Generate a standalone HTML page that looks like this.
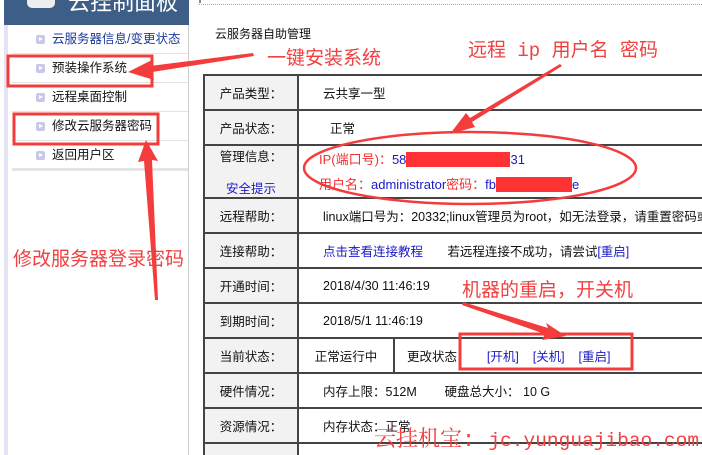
<!DOCTYPE html>
<html><head><meta charset="utf-8"><style>
*{margin:0;padding:0;box-sizing:border-box}
html,body{width:702px;height:455px;overflow:hidden}
body{background:#fff;position:relative;font-family:"Liberation Sans","Noto Sans CJK SC",sans-serif;font-size:12px;color:#111}
.abs{position:absolute}
#hdr{left:4px;top:0;width:185px;height:25px;background:#3d5f87;overflow:hidden}
#side{left:4px;top:25px;width:185px;height:430px;border-left:4px solid #e4e4f4;border-right:1px solid #d0d0d0}
.it{position:absolute;left:4px;width:176px;height:29px;border-bottom:1px solid #e2e2e2;line-height:29px;padding-left:24px;font-size:12.5px}
.it:before{content:"";position:absolute;left:24px;top:10px;width:9px;height:9px;background:#c8c8ea;border-radius:2px}
.it:after{content:"";position:absolute;left:27px;top:12px;border-left:4px solid #fff;border-top:2.5px solid transparent;border-bottom:2.5px solid transparent}
.it span{margin-left:16px}
#tw{position:absolute;left:203px;top:74px;width:499px;height:381px;overflow:hidden}
table{border-collapse:collapse;width:520px}
td{border:2px solid #444;height:35px;padding:0;font-size:12.5px;white-space:nowrap;overflow:hidden}
tr{height:35px}
td.l{width:94px;background:#f2f2f2;text-align:center}
td.v{padding-left:24px}
.blue{color:#1a1ac8}
.red{color:#f03030}
.ann{color:#f04040;font-family:"Liberation Mono","Noto Sans CJK SC",monospace;position:absolute;white-space:nowrap;font-size:19px}
</style></head><body>
<div id="hdr" class="abs">
<div class="abs" style="left:23px;top:-12px;width:28px;height:20px;background:#eee;border-radius:5px"></div>
<div class="abs" style="left:64px;top:-12px;color:#fff;font-size:22px;line-height:30px">云挂制面板</div>
</div>
<div class="abs" style="left:199px;top:4px;width:503px;border-top:1px dotted #aaa"></div>
<div class="abs" style="left:199px;top:0;width:2px;height:3px;background:#88a"></div>
<div id="side" class="abs">
<div class="it" style="top:0;color:#1a3a9a"><span>云服务器信息/变更状态</span></div>
<div class="it" style="top:29px"><span>预装操作系统</span></div>
<div class="it" style="top:58px"><span>远程桌面控制</span></div>
<div class="it" style="top:87px"><span>修改云服务器密码</span></div>
<div class="it" style="top:116px;border-bottom:3px solid #e4e4e4;height:30px"><span>返回用户区</span></div>
</div>
<div class="abs" style="left:215px;top:25px;font-size:12px">云服务器自助管理</div>
<div id="tw">
<table>
<tr><td class="l">产品类型：</td><td class="v" colspan="2">云共享一型</td></tr>
<tr><td class="l">产品状态：</td><td class="v" colspan="2">&nbsp;&nbsp;正常</td></tr>
<tr style="height:52px"><td class="l" style="height:52px;vertical-align:top;line-height:16px;padding-top:3px">管理信息：<br><br><span class="blue">安全提示</span></td><td class="v" colspan="2" style="height:52px;font-size:13px;line-height:25px;padding-left:20px"><span class="red">IP(端口号)：</span><span class="blue">58<span style="background:#f33;color:#f33">XXXXXXXXXXXX</span>31</span><br><span class="red">用户名：</span><span class="blue">administrator</span><span class="red">密码：</span><span class="blue">fb<span style="background:#f33;color:#f33">f0000000000</span>e</span></td></tr>
<tr><td class="l">远程帮助：</td><td class="v" colspan="2">linux端口号为：20332;linux管理员为root，如无法登录，请重置密码或</td></tr>
<tr><td class="l">连接帮助：</td><td class="v" colspan="2"><span class="blue">点击查看连接教程</span>&nbsp;&nbsp;&nbsp;&nbsp;&nbsp;&nbsp;&nbsp;若远程连接不成功，请尝试<span class="blue">[重启]</span></td></tr>
<tr><td class="l">开通时间：</td><td class="v" colspan="2">2018/4/30 11:46:19</td></tr>
<tr><td class="l">到期时间：</td><td class="v" colspan="2">2018/5/1 11:46:19</td></tr>
<tr><td class="l">当前状态：</td><td style="width:96px;text-align:center">正常运行中</td><td style="padding-left:12px">更改状态：&nbsp;&nbsp;&nbsp;&nbsp;&nbsp;<span class="blue">[开机]&nbsp;&nbsp;&nbsp;&nbsp;[关机]&nbsp;&nbsp;&nbsp;&nbsp;[重启]</span></td></tr>
<tr><td class="l">硬件情况：</td><td class="v" colspan="2">内存上限：512M&nbsp;&nbsp;&nbsp;&nbsp;&nbsp;&nbsp;&nbsp;&nbsp;硬盘总大小： 10 G</td></tr>
<tr><td class="l">资源情况：</td><td class="v" colspan="2">内存状态：正常</td></tr>
<tr><td class="l">已运行时间</td><td class="v" colspan="2">0分钟</td></tr>
</table>
</div>
<svg class="abs" style="left:0;top:0" width="702" height="455">
<g fill="none" stroke="#f43c3c" stroke-width="3">
<rect x="8" y="56" width="144" height="30"/>
<rect x="14" y="114" width="144" height="30"/>
<rect x="460" y="334" width="172" height="35"/>
<ellipse cx="470" cy="168" rx="166" ry="36" stroke-width="2.5"/>
</g>
<g fill="#f43c3c">
<polygon points="253,53 150,66 152,60 128,72 154,80 152,72 254,56"/>
<polygon points="560,64 470,118 466,113 450,134 475,127 472,122 562,66"/>
<polygon points="158,300 152,160 158,161 146,140 138,162 144,161 155,300"/>
<polygon points="463,302 548,328 546,323 566,336 542,340 545,334 462,305"/>
</g>
</svg>
<div class="ann" style="left:267px;top:43px">一键安装系统</div>
<div class="ann" style="left:468px;top:35px">远程 ip 用户名 密码</div>
<div class="ann" style="left:13px;top:244px">修改服务器登录密码</div>
<div class="ann" style="left:462px;top:275px">机器的重启，开关机</div>
<div class="ann" style="left:374px;top:428px;font-size:22px;line-height:26px;font-family:'Liberation Mono','Noto Serif CJK SC',monospace">云挂机宝: <span style="font-size:19.5px">jc.yunguajibao.com</span></div>
</body></html>
